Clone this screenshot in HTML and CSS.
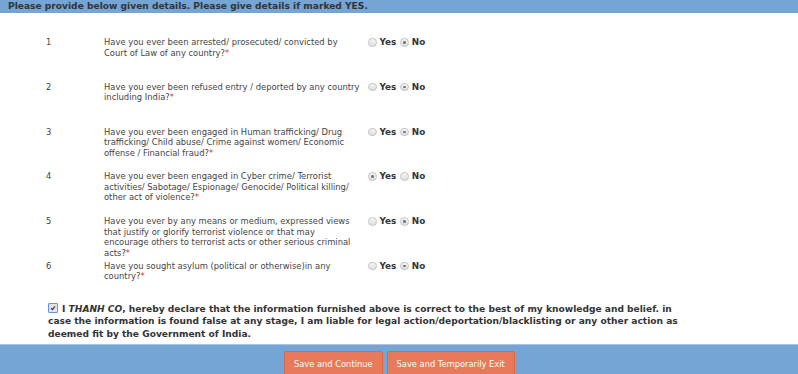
FILE: index.html
```html
<!DOCTYPE html>
<html>
<head>
<meta charset="utf-8">
<link rel="stylesheet" href="styles.css">
</head>
<body>
<div class="header">Please provide below given details. Please give details if marked YES.</div>
<div class="questions">
  <div class="row">
    <div class="num">1</div>
    <div class="q">Have you ever been arrested/ prosecuted/ convicted by Court of Law of any country?<span class="req">*</span></div>
    <div class="opts"><span class="radio"></span><span class="lbl">Yes</span><span class="radio on"></span><span class="lbl">No</span></div>
  </div>
  <div class="row">
    <div class="num">2</div>
    <div class="q">Have you ever been refused entry / deported by any country including India?<span class="req">*</span></div>
    <div class="opts"><span class="radio"></span><span class="lbl">Yes</span><span class="radio on"></span><span class="lbl">No</span></div>
  </div>
  <div class="row">
    <div class="num">3</div>
    <div class="q">Have you ever been engaged in Human trafficking/ Drug trafficking/ Child abuse/ Crime against women/ Economic offense / Financial fraud?<span class="req">*</span></div>
    <div class="opts"><span class="radio"></span><span class="lbl">Yes</span><span class="radio on"></span><span class="lbl">No</span></div>
  </div>
  <div class="row">
    <div class="num">4</div>
    <div class="q">Have you ever been engaged in Cyber crime/ Terrorist activities/ Sabotage/ Espionage/ Genocide/ Political killing/ other act of violence?<span class="req">*</span></div>
    <div class="opts"><span class="radio on"></span><span class="lbl">Yes</span><span class="radio"></span><span class="lbl">No</span></div>
  </div>
  <div class="row">
    <div class="num">5</div>
    <div class="q">Have you ever by any means or medium, expressed views that justify or glorify terrorist violence or that may encourage others to terrorist acts or other serious criminal acts?<span class="req">*</span></div>
    <div class="opts"><span class="radio"></span><span class="lbl">Yes</span><span class="radio on"></span><span class="lbl">No</span></div>
  </div>
  <div class="row">
    <div class="num">6</div>
    <div class="q">Have you sought asylum (political or otherwise)in any country?<span class="req">*</span></div>
    <div class="opts"><span class="radio"></span><span class="lbl">Yes</span><span class="radio on"></span><span class="lbl">No</span></div>
  </div>
</div>
<div class="declare">
  <span class="check"><svg width="6" height="6" viewBox="0 0 6 6"><path d="M1 3.2 L2.4 4.6 L5 1.4" fill="none" stroke="#333" stroke-width="1.1"/></svg></span>I <i>THANH CO</i>, hereby declare that the information furnished above is correct to the best of my knowledge and belief. in case the information is found false at any stage, I am liable for legal action/deportation/blacklisting or any other action as deemed fit by the Government of India.
</div>
<div class="footer">
  <button class="btn">Save and Continue</button>
  <button class="btn">Save and Temporarily Exit</button>
</div>
</body>
</html>
```
FILE: styles.css
```css
html, body {
  margin: 0;
  padding: 0;
  background: #fff;
  font-family: "DejaVu Sans", Verdana, sans-serif;
  color: #444;
  overflow: hidden;
}
.header {
  background: #74a5d5;
  height: 13px;
  line-height: 12px;
  padding-left: 8px;
  font-size: 9.1px;
  font-weight: bold;
  color: #333;
}
.questions {
  padding-top: 24px;
}
.row {
  display: flex;
  height: 44.8px;
  font-size: 8.4px;
  line-height: 10.5px;
}
.row:last-child {
  height: 37px;
}
.num {
  width: 58px;
  padding-left: 46px;
}
.q {
  width: 258px;
  margin-right: 6px;
}
.req {
  color: #e0302a;
}
.opts {
  display: flex;
  align-items: center;
  height: 10.5px;
  font-weight: bold;
  font-size: 8.8px;
  color: #333;
}
.radio {
  width: 6.5px;
  height: 6.5px;
  border-radius: 50%;
  border: 0.5px solid #c4c4c4;
  background: linear-gradient(#f6f6f6, #dedede);
  margin-right: 3px;
  box-sizing: content-box;
  position: relative;
}
.radio.on::after {
  content: "";
  position: absolute;
  left: 2px;
  top: 2px;
  width: 2.5px;
  height: 2.5px;
  border-radius: 50%;
  background: #777;
}
.lbl {
  margin-right: 4px;
}
.declare {
  margin: 5px 108px 0 48px;
  font-size: 9.1px;
  font-weight: bold;
  line-height: 12.5px;
  color: #333;
}
.check {
  display: inline-block;
  width: 8px;
  height: 8px;
  border: 1px solid #6d8fe6;
  border-radius: 1px;
  background: #e4e4e4;
  vertical-align: -1px;
  margin-right: 4px;
  position: relative;
}
.check svg {
  position: absolute;
  left: 1px;
  top: 1px;
}
.footer {
  margin-top: 4px;
  background: #74a5d5;
  border-top: 1px solid #a9c6e4;
  height: 40px;
  padding-left: 284px;
  padding-top: 6px;
  display: flex;
  gap: 4px;
  align-items: flex-start;
}
.btn {
  background: #e8795a;
  border: 1px solid #d6684b;
  border-radius: 2px;
  color: #fff;
  font-family: "DejaVu Sans", Verdana, sans-serif;
  font-size: 8.3px;
  height: 26px;
  padding: 0 9px;
  margin: 0;
}
```
